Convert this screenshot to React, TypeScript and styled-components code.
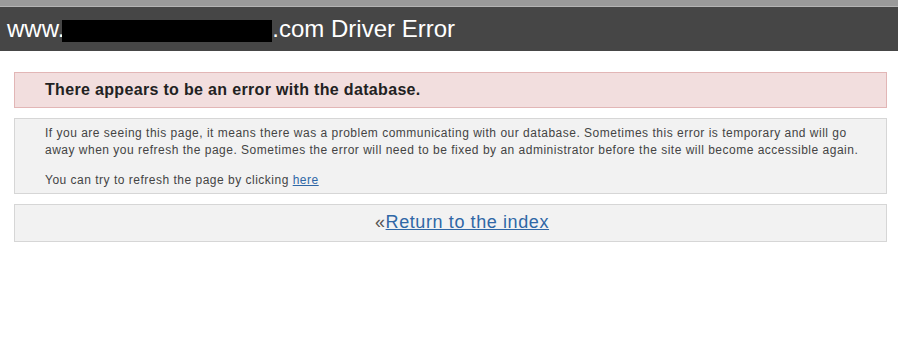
import styled, { createGlobalStyle } from "styled-components";

const GlobalStyle = createGlobalStyle`
  html,
  body {
    margin: 0;
    padding: 0;
    background: #ffffff;
    font-family: "Liberation Sans", Helvetica, Arial, sans-serif;
  }
`;

const ChromeStrip = styled.div`
  height: 6px;
  background: #9a9a9a;
  border-bottom: 1px solid #b4b4b4;
`;

const Header = styled.h1`
  margin: 0;
  height: 44px;
  padding-left: 7px;
  background: #464646;
  color: #ffffff;
  font-size: 24px;
  font-weight: normal;
  line-height: 44px;
  white-space: nowrap;
`;

const Redacted = styled.span`
  display: inline-block;
  width: 210px;
  height: 22px;
  margin-left: -2px;
  background: #000000;
  vertical-align: -5px;
`;

const Content = styled.main`
  display: flex;
  flex-direction: column;
  gap: 10px;
  margin: 21px 11px 0 14px;
`;

const Alert = styled.div`
  padding: 7px 30px;
  background: #f2dede;
  border: 1px solid #e2b6b6;
  color: #222222;
  font-size: 16px;
  font-weight: bold;
  line-height: 20px;
  letter-spacing: 0.33px;
`;

const Panel = styled.div<{ $center?: boolean }>`
  background: #f2f2f2;
  border: 1px solid #d6d6d6;
  text-align: ${(p) => (p.$center ? "center" : "left")};
`;

const Details = styled(Panel)`
  padding: 6px 18px 5px 30px;
  color: #444444;
  font-size: 12px;
  line-height: 16.5px;
  letter-spacing: 0.5px;
`;

const Paragraph = styled.p`
  margin: 0;

  & + & {
    margin-top: 13.5px;
  }
`;

const Link = styled.a`
  color: #2f67a6;
  text-decoration: underline;
`;

const ReturnBar = styled(Panel)`
  padding: 6px 0 8px 23px;
  color: #555555;
  font-size: 18px;
  line-height: 22px;
  letter-spacing: 0.6px;
`;

const App = () => (
  <>
    <GlobalStyle />
    <ChromeStrip />
    <Header>
      www.<Redacted />.com Driver Error
    </Header>
    <Content>
      <Alert>There appears to be an error with the database.</Alert>
      <Details>
        <Paragraph>
          If you are seeing this page, it means there was a problem
          communicating with our database. Sometimes this error is temporary
          and will go away when you refresh the page. Sometimes the error will
          need to be fixed by an administrator before the site will become
          accessible again.
        </Paragraph>
        <Paragraph>
          You can try to refresh the page by clicking <Link href="#">here</Link>
        </Paragraph>
      </Details>
      <ReturnBar $center>
        «<Link href="#">Return to the index</Link>
      </ReturnBar>
    </Content>
  </>
);

export default App;
